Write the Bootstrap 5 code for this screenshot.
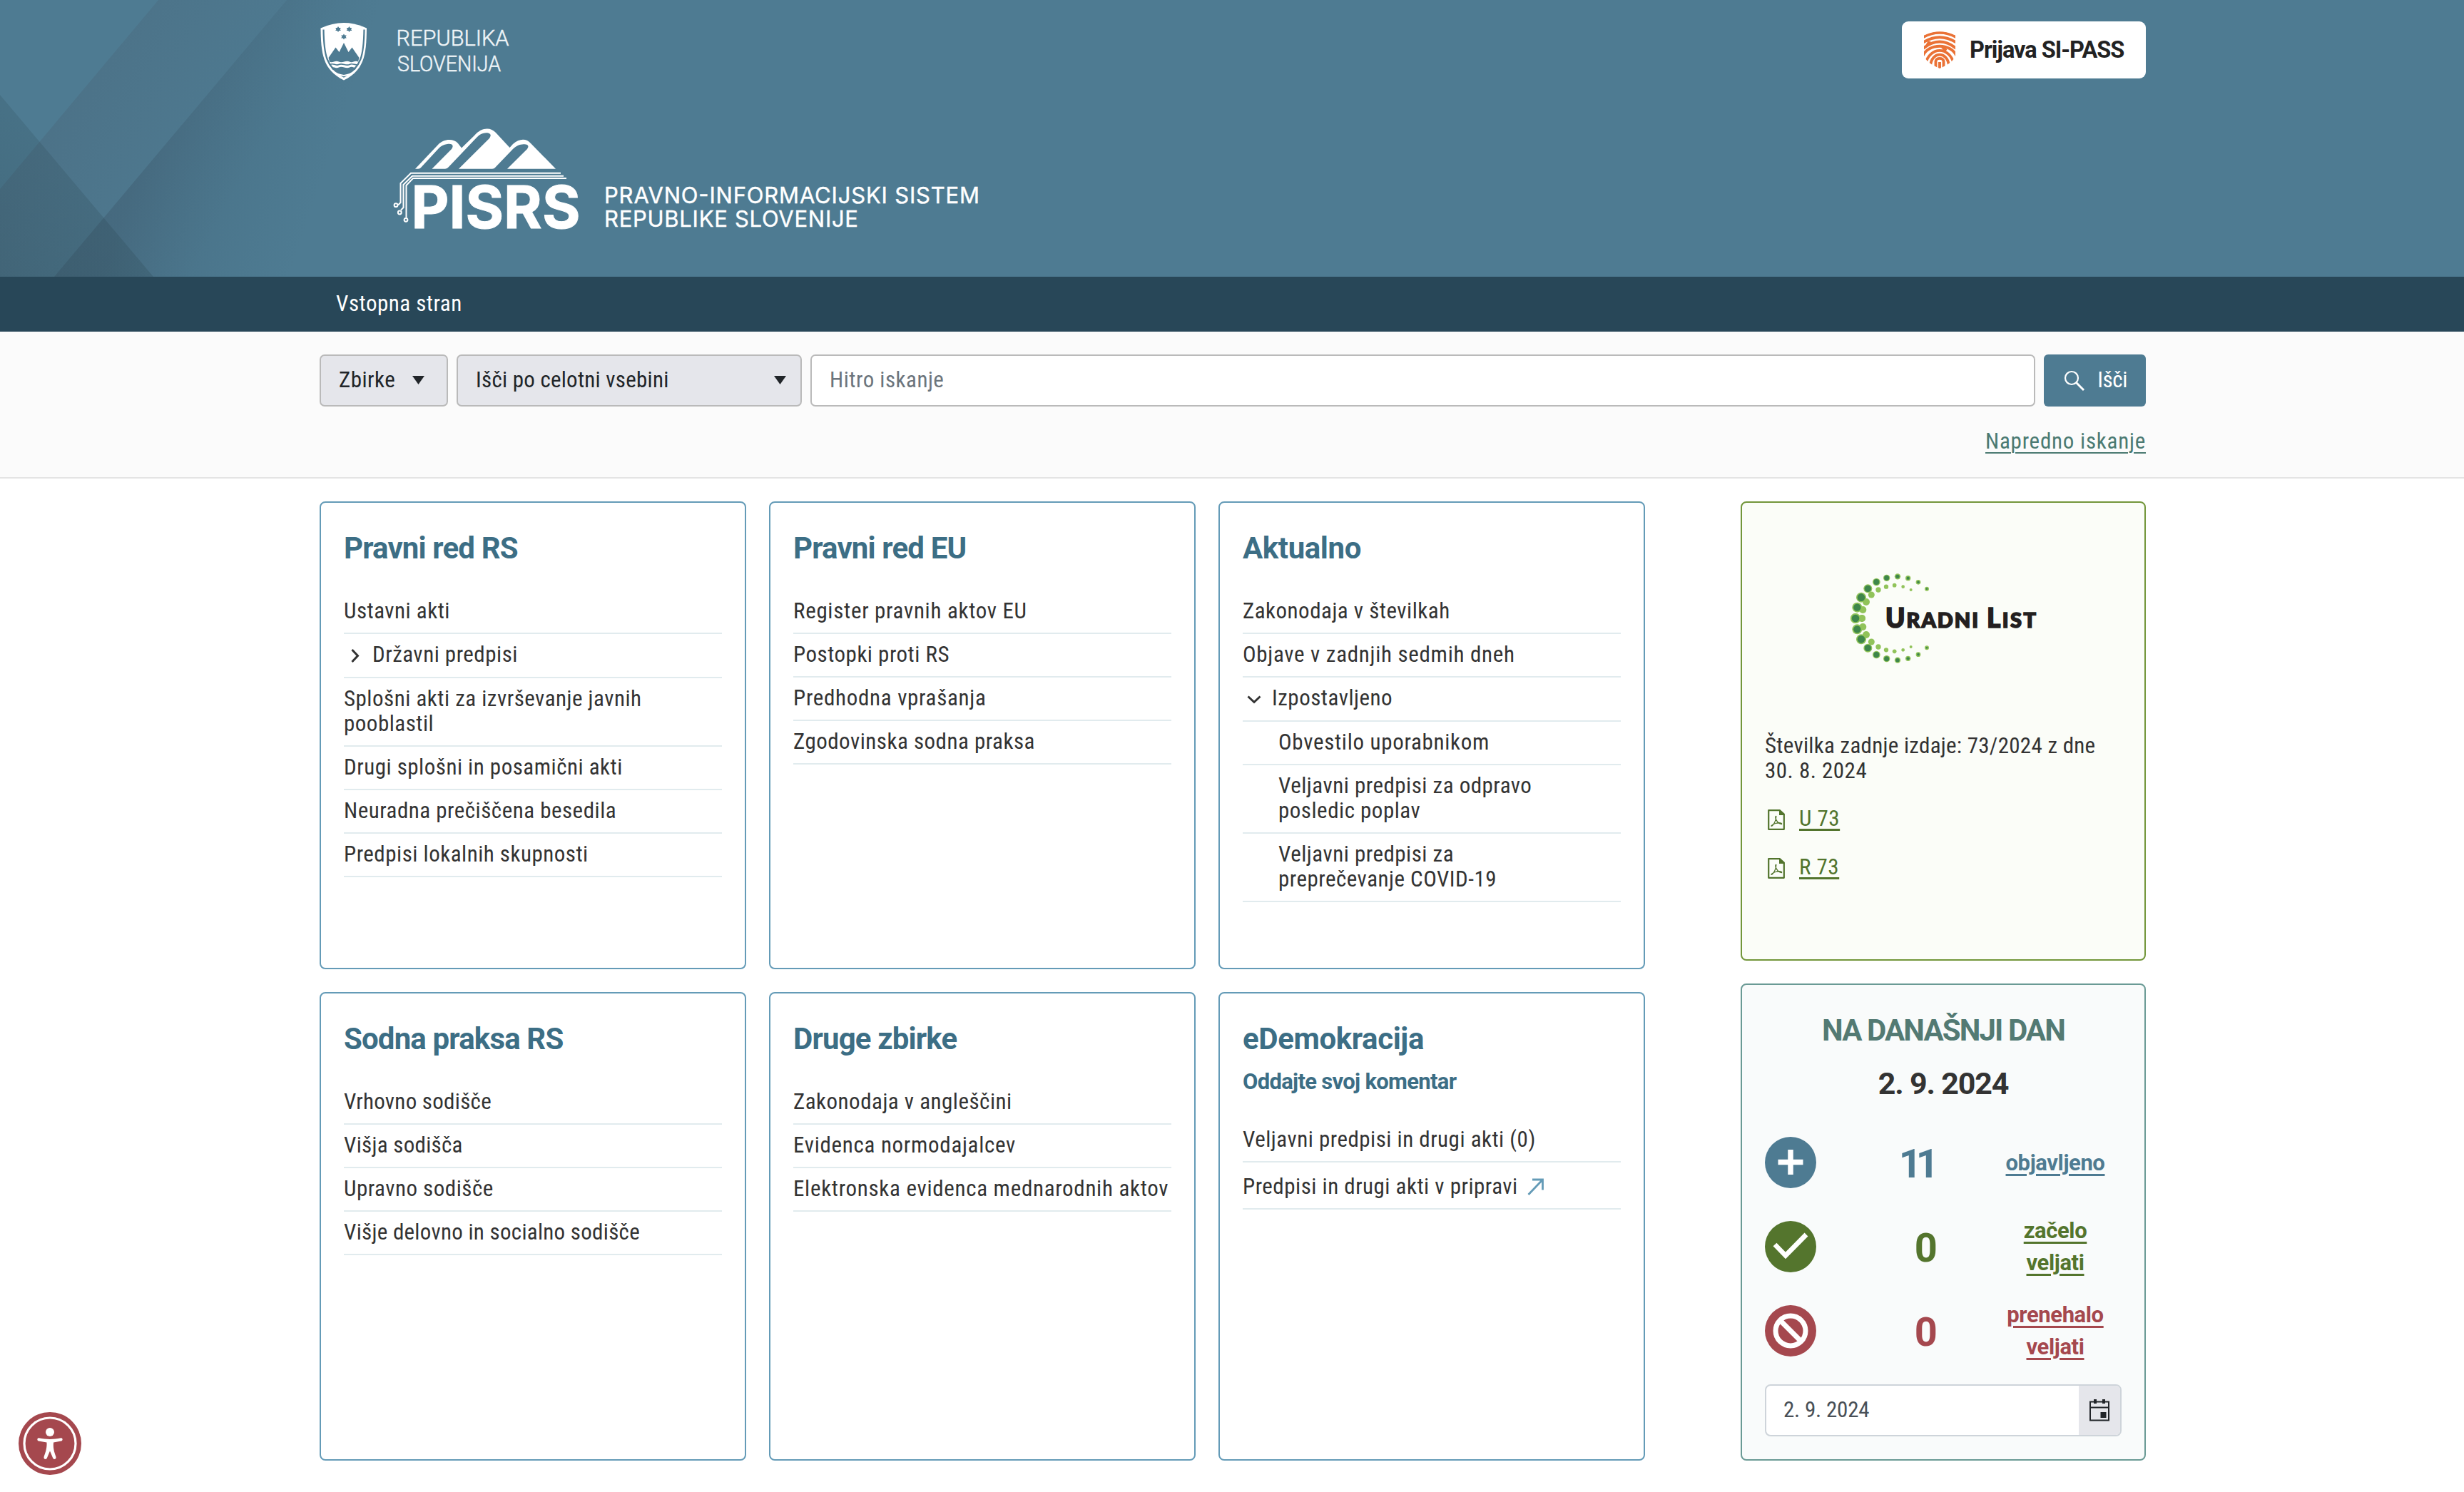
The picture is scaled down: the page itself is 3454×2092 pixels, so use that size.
<!DOCTYPE html>
<html lang="sl">
<head>
<meta charset="utf-8">
<title>PISRS</title>
<meta name="viewport" content="width=device-width, initial-scale=1">
<link href="https://cdn.jsdelivr.net/npm/bootstrap@5.3.0/dist/css/bootstrap.min.css" rel="stylesheet">
<style>
:root{--petrol:#4e7b92;--petrol-dark:#284758;--title:#3c6e85;--line:#e1ebee}
body{font-family:"Roboto Condensed",Roboto,"Noto Sans",sans-serif;font-stretch:75%;font-size:31px;letter-spacing:.5px;line-height:35px;color:#333;background:#fff;height:2092px;overflow:hidden}
svg{display:block;flex:none}
.t7{letter-spacing:.7px}.t3{letter-spacing:.28px}
.wrap{padding-left:448px;padding-right:446px}
.site-head{background:var(--petrol);height:388px;position:relative}
.head-art{position:absolute;left:0;top:0}
.head-in{position:relative;padding-top:30px}
.wide{font-family:Roboto,"Noto Sans",sans-serif;font-stretch:100%;font-weight:700}
.btn-login{--bs-btn-color:#222;width:342px;height:80px;border-radius:9px;font-size:32.5px;padding:0 0 0 30px;gap:20px;letter-spacing:-1px;background:#fff;font-weight:700}
.pisrs-logo{margin:60px 0 0 102px}
.site-nav{background:var(--petrol-dark);height:77px}
.site-nav .nav-link{color:#fff;padding:0 0 2px 23px}
.search-zone{height:206px;background:#fbfbfb;border-bottom:2px solid #e4e4e4;padding-top:32px}
.search-row{gap:12px;height:73px;margin-bottom:31px}
.ctl{border:2px solid #bababa;border-radius:7px;background:#e5e6eb;color:#212529;font-size:31px;letter-spacing:inherit;line-height:35px;padding:0 25px 2px}
.ctl-a{width:180px}.ctl-b{width:484px;padding-right:20px;letter-spacing:.25px}
.ctl-in{background:#fff}.ctl-in::placeholder{color:#6c757d;opacity:1}
.btn-go,.btn-go:hover{background:var(--petrol);color:#fff;width:143px;border-radius:6px;font-size:31px;letter-spacing:-.4px;padding:0 25px 0 27px}
.adv{color:#4b7a72;text-underline-offset:5px;text-decoration-thickness:2px;letter-spacing:.77px}
.board{padding-top:32px;gap:134px}
.tiles{display:grid;grid-template-columns:repeat(3,598px);grid-template-rows:656px 657px;gap:32px}
.tile{border:2px solid #649bb7;border-radius:8px;background:#fff;padding:39px 32px 0}
.tile h2,.side-title{font-size:42px;line-height:50px;color:var(--title);letter-spacing:-.85px;margin:0 0 34px}
.tile h3{font-size:31px;line-height:35px;color:var(--title);margin:-17px 0 35px;letter-spacing:-.7px}
.tile h2.loose{letter-spacing:-.4px}
.links{list-style:none;margin:0;padding:0}
.links li{border-bottom:2px solid var(--line);padding:11px 0 13px}
.links li.tog{padding-bottom:14px;padding-left:10px;display:flex;gap:18px}
.links li.tog.open{padding-left:6px;gap:15px}
.links li.sub{padding-left:50px}
.links li.ext{padding:16px 0 13px;display:flex;gap:13px}
.side{width:568px;display:grid;grid-template-rows:644px 669px;gap:32px}
.gazette{border:2px solid #72963a;border-radius:8px;background:#fbfdf8;padding:76px 32px 0}
.gazette p{margin:71px 0 32px}
.pdf{gap:20px;padding-left:4px;margin-bottom:33px;color:#52742d;height:35px}
.pdf a{color:#52742d;text-underline-offset:4px;text-decoration-thickness:3px}
.pdf svg{margin-top:4px}
.today{border:2px solid #6a9a95;border-radius:8px;background:#f9fbfb;padding:39px 32px 0}
.side-title{color:#537a73;margin:0!important;text-align:center;letter-spacing:-1.9px!important}
.side-date{color:#333;margin:24px 0 50px;text-align:center;font-size:43px;line-height:50px;letter-spacing:-1.2px}
.stat{height:72px;margin-bottom:46px}
.stat b{font-size:56px;width:170px;text-align:right;letter-spacing:0;padding-top:4px}
.stat b.tight{letter-spacing:-8px;padding-right:6px}
.stat a{width:186px;margin-left:72px;text-align:center;letter-spacing:-.4px;line-height:45px;color:inherit;text-underline-offset:5px;text-decoration-thickness:3px}
.c-blue{color:#4e7b92}.c-green{color:#54752d}.c-red{color:#a5484e}
.date-box{height:73px;border:2px solid #ced4da;border-radius:8px;background:#fff;margin-top:-7px;overflow:hidden;color:#495057}
.date-box .cal{width:58px;background:#e5e6eb}
.date-box .val{padding:0 0 2px 24px;letter-spacing:-.2px}
.a11y{position:fixed;left:26px;top:1980px}
</style>
<script src="https://cdn.jsdelivr.net/npm/bootstrap@5.3.0/dist/js/bootstrap.bundle.min.js"></script>
</head>
<body>
<header class="site-head">
  <svg class="head-art" width="800" height="388" viewBox="0 0 800 388">
    <defs>
      <linearGradient id="ga" gradientUnits="userSpaceOnUse" x1="60" y1="200" x2="300" y2="330"><stop offset="0" stop-color="#41414f" stop-opacity=".15"/><stop offset="1" stop-color="#41414f" stop-opacity="0"/></linearGradient>
      <linearGradient id="gb" gradientUnits="userSpaceOnUse" x1="190" y1="250" x2="430" y2="330"><stop offset="0" stop-color="#253040" stop-opacity=".18"/><stop offset="1" stop-color="#305060" stop-opacity="0"/></linearGradient>
      <linearGradient id="gc" gradientUnits="userSpaceOnUse" x1="0" y1="388" x2="110" y2="220"><stop offset="0" stop-color="#203840" stop-opacity=".24"/><stop offset="1" stop-color="#203840" stop-opacity=".15"/></linearGradient>
    </defs>
    <path d="M222 0L0 265V388H700L800 0Z" fill="url(#ga)"/>
    <path d="M402 0L76 388H640L800 0Z" fill="url(#gb)"/>
    <path d="M0 133L215 388H0Z" fill="url(#gc)"/>
  </svg>
  <div class="wrap head-in">
    <div class="d-flex justify-content-between">
      <svg width="280" height="86" viewBox="448 30 280 86">
        <path fill="#fff" d="M449.500 39.500Q482 24.500 514 39.500C513.500 74 512 98 482 112.500C452 98 450 74 449.500 39.500Z"/>
        <path fill="none" stroke="#4e7b92" stroke-width="2.200" d="M453.500 41.500C454 76 457 95 482 107.500C507 95 510 76 510.500 41.500"/>
        <path fill="#4e7b92" d="M460.500 81L470.500 66.500L475.500 73L482 60L488.500 73L493.500 66.500L503.500 81L502 86.500C497 84 494 89 490 86.500C485 84 480 89 475 86.500C470 84 466 89 462 86.500Z"/>
        <path fill="none" stroke="#4e7b92" stroke-width="1.600" d="M463 90.500C467 87.500 470 93 475 90.500C480 88 485 93 490 90.500C494 88 498 92 501 90.500"/>
        <path fill="#4e7b92" d="M464.500 95C468 92.500 471 97 475 94.500C480 92 485 97 490 94.500C494 92.500 497 96 499.500 95C496 101 490 105 482 107C474 105 468 101 464.500 95Z"/>
        <path fill="none" stroke="#fff" stroke-width="2" d="M466 98.500Q472 105 482 106Q492 105 498 98.500"/>
        <g fill="#4e7b92"><path id="st" d="M474 37l1.300 2 2.500-.1-1.200 2.100 1.200 2.100-2.500-.1-1.300 2-1.300-2-2.500.1 1.200-2.100-1.200-2.100 2.500.1z"/><use href="#st" x="15.500"/><use href="#st" x="8" y="10.500"/></g>
        <g font-family="Roboto" font-stretch="100%" font-weight="300" font-size="31" fill="#eef4f7" stroke="#eef4f7" stroke-width=".5" letter-spacing="0"><text x="555.500" y="63.500" textLength="158" lengthAdjust="spacingAndGlyphs">REPUBLIKA</text><text x="557" y="99.500" textLength="145" lengthAdjust="spacingAndGlyphs">SLOVENIJA</text></g>
      </svg>
      <a class="btn btn-login d-flex align-items-center" href="#">
        <svg width="44" height="52" viewBox="0 0 44 52"><defs><clipPath id="sh"><path d="M0 5.500Q22-5 44 5.500V34C42 41 34 47 22 52C10 47 2 41 0 34Z"/></clipPath></defs>
          <g clip-path="url(#sh)" fill="none" stroke="#ea7236" stroke-width="3.900"><path d="M-2 8.500Q22-5 46 8.500M-2 16Q22 .5 46 16M-2 24.500Q22 4.500 46 24.500M-2 35C6 16 38 16 46 35M2 46C8 20.500 36 20.500 42 46M9 48C11 27.500 33 27.500 35 48M16.500 54V42C17 36.500 27 36.500 27.500 42V54M22 43V56M4 20L8 13.500M25 21L31 27"/></g></svg>
        <span class="wide">Prijava SI-PASS</span>
      </a>
    </div>
    <svg class="pisrs-logo" width="840" height="180" viewBox="550 176 840 180">
      <path fill="#fff" d="M582 236.700L614 203C622 194 636 194 642 201L647 207.500L665 190C675 178 688 178 695 186L714.500 207L719 202C728 194 738 194 744 201L779 236.700H711L739 209C743 203 738 201.500 732 202.500C726 203 722 206 718 210L694 235Q693 236.700 690 236.700H643L686 194C691 187 684 185 677 187C673 188 671 190 668 193L629 234Q627 236.700 624 236.700H605.500L633 209C637 203 633 201 627 202C622 202.500 618 205 615 208L590 235Q589 236.700 586 236.700Z"/>
      <g fill="none" stroke="#fff" stroke-width="2"><path d="M786 242.700H576L561.500 257V284L558 287.500M790 246.700H578L565.500 259V291L562 294.500M794 250H579L569.500 260V305"/><circle cx="555" cy="287.700" r="2.400"/><circle cx="560.300" cy="298" r="2.400"/><circle cx="569" cy="308.300" r="2.400"/></g>
      <text x="576.500" y="320" font-family="Inter" font-weight="700" font-size="82" fill="#fff" textLength="237" lengthAdjust="spacingAndGlyphs" letter-spacing="0" stroke="#fff" stroke-width="1">PISRS</text>
      <g font-family="Inter" font-weight="400" font-size="31" fill="#fff" stroke="#fff" stroke-width=".4" letter-spacing="0"><text x="847" y="285" textLength="526">PRAVNO-INFORMACIJSKI SISTEM</text><text x="847" y="317.700" textLength="356">REPUBLIKE SLOVENIJE</text></g>
    </svg>
  </div>
</header>
<nav class="site-nav wrap d-flex align-items-center"><a class="nav-link" href="#">Vstopna stran</a></nav>
<section class="search-zone wrap">
  <div class="search-row d-flex">
    <button class="ctl ctl-a d-flex align-items-center justify-content-between"><span>Zbirke</span><svg width="28" height="12" viewBox="0 0 28 12"><path d="M5 0h17l-8.500 12z" fill="#212529"/></svg></button>
    <button class="ctl ctl-b d-flex align-items-center justify-content-between"><span>Išči po celotni vsebini</span><svg width="17" height="12" viewBox="0 0 17 12"><path d="M0 0h17l-8.500 12z" fill="#212529"/></svg></button>
    <input class="ctl ctl-in flex-grow-1" type="text" placeholder="Hitro iskanje">
    <button class="btn btn-go d-flex align-items-center justify-content-between"><svg width="29" height="29" viewBox="0 0 29 29"><g fill="none" stroke="#fff" stroke-width="2.200"><circle cx="11" cy="11" r="9"/><path d="M17.500 17.500L28 28" stroke-width="3"/></g></svg><span>Išči</span></button>
  </div>
  <div class="text-end"><a class="adv" href="#">Napredno iskanje</a></div>
</section>
<main class="board wrap d-flex">
  <div class="tiles">
    <section class="tile"><h2 class="wide">Pravni red RS</h2><ul class="links"><li>Ustavni akti</li><li class="tog"><svg width="12" height="35" viewBox="0 0 12 35"><path d="M1.500 11L9.500 19.500L1.500 28" fill="none" stroke="#333" stroke-width="3"/></svg><span>Državni predpisi</span></li><li>Splošni akti za izvrševanje javnih pooblastil</li><li>Drugi splošni in posamični akti</li><li>Neuradna prečiščena besedila</li><li>Predpisi lokalnih skupnosti</li></ul></section>
    <section class="tile"><h2 class="wide">Pravni red EU</h2><ul class="links"><li class="t7">Register pravnih aktov EU</li><li>Postopki proti RS</li><li class="t7">Predhodna vprašanja</li><li>Zgodovinska sodna praksa</li></ul></section>
    <section class="tile"><h2 class="wide loose">Aktualno</h2><ul class="links"><li>Zakonodaja v številkah</li><li class="t7">Objave v zadnjih sedmih dneh</li><li class="tog open"><svg width="20" height="35" viewBox="0 0 20 35"><path d="M1.500 15.500L10 23.500L18.500 15.500" fill="none" stroke="#333" stroke-width="3"/></svg><span>Izpostavljeno</span></li><li class="sub t7">Obvestilo uporabnikom</li><li class="sub">Veljavni predpisi za odpravo<br>posledic poplav</li><li class="sub">Veljavni predpisi za<br>preprečevanje COVID-19</li></ul></section>
    <section class="tile"><h2 class="wide">Sodna praksa RS</h2><ul class="links"><li class="t3">Vrhovno sodišče</li><li class="t3">Višja sodišča</li><li>Upravno sodišče</li><li class="t3">Višje delovno in socialno sodišče</li></ul></section>
    <section class="tile"><h2 class="wide">Druge zbirke</h2><ul class="links"><li>Zakonodaja v angleščini</li><li class="t7">Evidenca normodajalcev</li><li class="text-nowrap t7">Elektronska evidenca mednarodnih aktov</li></ul></section>
    <section class="tile"><h2 class="wide loose">eDemokracija</h2><h3 class="wide">Oddajte svoj komentar</h3><ul class="links"><li>Veljavni predpisi in drugi akti (0)</li><li class="ext"><span>Predpisi in drugi akti v pripravi</span><svg width="24" height="30" viewBox="0 0 24 30"><path d="M1.500 29L21.500 8M7 8H21.500V22.500" fill="none" stroke="#649bb7" stroke-width="2.800"/></svg></li></ul></section>
  </div>
  <aside class="side">
    <section class="gazette">
      <svg width="500" height="176" viewBox="2474 781 500 176" id="ul">
        <g font-family="Lato" font-weight="900" fill="#231f20" stroke="#231f20" stroke-width="1.600" letter-spacing="0"><text x="2643" y="880" textLength="130" lengthAdjust="spacing" font-size="37">U<tspan font-size="29">RADNI</tspan></text><text x="2785" y="880" textLength="69" font-size="37">L<tspan font-size="29">IST</tspan></text></g>
      </svg>
      <p><span class="t3">Številka zadnje izdaje: 73/2024 z dne</span><br>30. 8. 2024</p>
      <div class="pdf d-flex align-items-center"><svg width="24" height="29" viewBox="0 0 24 29"><g id="pd"><path d="M1.200 1.200H17L22.800 6.500V27.800H1.200Z" fill="none" stroke="#52742d" stroke-width="2.200" stroke-linejoin="round"/><path d="M16 .5V8H23.500L17.500 1Z" fill="#52742d"/><path d="M5 23.500C8 22.500 12 15 11.800 9.500C11 9 10.500 10.500 11.200 13C12.500 17 16 20.500 19.500 20.500C20.500 19 16 18 11 19.500C8 20.500 4.500 22 5 23.500" fill="none" stroke="#52742d" stroke-width="1.300"/></g></svg><a href="#">U 73</a></div>
      <div class="pdf d-flex align-items-center"><svg width="24" height="29" viewBox="0 0 24 29"><use href="#pd"/></svg><a href="#">R 73</a></div>
    </section>
    <section class="today">
      <h2 class="side-title wide">NA DANAŠNJI DAN</h2>
      <div class="side-date wide">2. 9. 2024</div>
      <div class="stat d-flex align-items-center c-blue"><svg width="72" height="72" viewBox="0 0 72 72"><circle cx="36" cy="36" r="36" fill="currentColor"/><path d="M36 18V53M18.500 35.500H53.500" stroke="#fff" stroke-width="7.500"/></svg><b class="wide tight">11</b><a class="wide" href="#">objavljeno</a></div>
      <div class="stat d-flex align-items-center c-green"><svg width="72" height="72" viewBox="0 0 72 72"><circle cx="36" cy="36" r="36" fill="currentColor"/><path d="M14 33L29 48.500L58 19" fill="none" stroke="#fff" stroke-width="6.800"/></svg><b class="wide">0</b><a class="wide" href="#">začelo<br>veljati</a></div>
      <div class="stat d-flex align-items-center c-red"><svg width="72" height="72" viewBox="0 0 72 72"><circle cx="36" cy="36" r="36" fill="currentColor"/><circle cx="36" cy="36" r="21" fill="none" stroke="#fff" stroke-width="7"/><path d="M21 21L50 50" stroke="#fff" stroke-width="7"/></svg><b class="wide">0</b><a class="wide" href="#">prenehalo<br>veljati</a></div>
      <div class="date-box d-flex align-items-stretch"><div class="val flex-grow-1 d-flex align-items-center">2. 9. 2024</div><div class="cal d-flex align-items-center justify-content-center"><svg width="28" height="31" viewBox="0 0 28 31"><path d="M1 3.500H27V29.500H1ZM1 11.500H27" fill="none" stroke="#212529" stroke-width="2"/><path d="M6 0h4v6H6zM18 0h4v6h-4zM15.500 18h8v8h-8z" fill="#212529"/></svg></div></div>
    </section>
  </aside>
</main>
<svg class="a11y" width="88" height="88" viewBox="0 0 88 88"><circle cx="44" cy="44" r="44" fill="#a5484e"/><circle cx="44" cy="44" r="36" fill="none" stroke="#fff" stroke-width="3.200"/><circle cx="44" cy="28" r="6" fill="#fff"/><path d="M28.500 36.300C39 38.500 49 38.500 59.500 36.300C62 36 62.500 40 60 40.500L49 42.500C48 52 51 58 52.500 63C53 66 49.500 67 48.200 64.500L44 54.500L39.800 64.500C38.500 67 35 66 35.500 63C37 58 40 52 39.500 42.500L28 40.500C25.500 40 26 36 28.500 36.300Z" fill="#fff"/></svg>
<script>
// Uradni list emblem: two arcs of dots, mirrored about the horizontal axis
const outer=[[183,261,21,16],[190,215,21,15.500],[207,173,21,16],[235,136,18,14],[271,108,16,12],[314,91,14,10.500],[360,85,12.500,8],[404,92,11,6.500],[447,109,10,5.500],[483,137,9,4]],
inner=[[210,261,15],[214,225,15],[228,192,15],[250,162,13.500],[279,141,11],[312,128,9.500],[347,122,8.500],[383,128,7],[416,141,6]];
let g='';const dot=(x,y,r,c)=>{g+=`<circle cx="${2540+x/3}" cy="${780+y/3}" r="${r/3}" fill="${c}"/>`};
for(const s of [1,-1]){inner.forEach(([x,y,r])=>dot(x,261+s*(y-261),r,'#91c35a'));outer.forEach(([x,y,r,q])=>{dot(x,261+s*(y-261),r,'#91c35a');dot(x,261+s*(y-261),q,'#3e864b')})}
document.getElementById('ul').insertAdjacentHTML('afterbegin',g);
</script>
</body>
</html>
